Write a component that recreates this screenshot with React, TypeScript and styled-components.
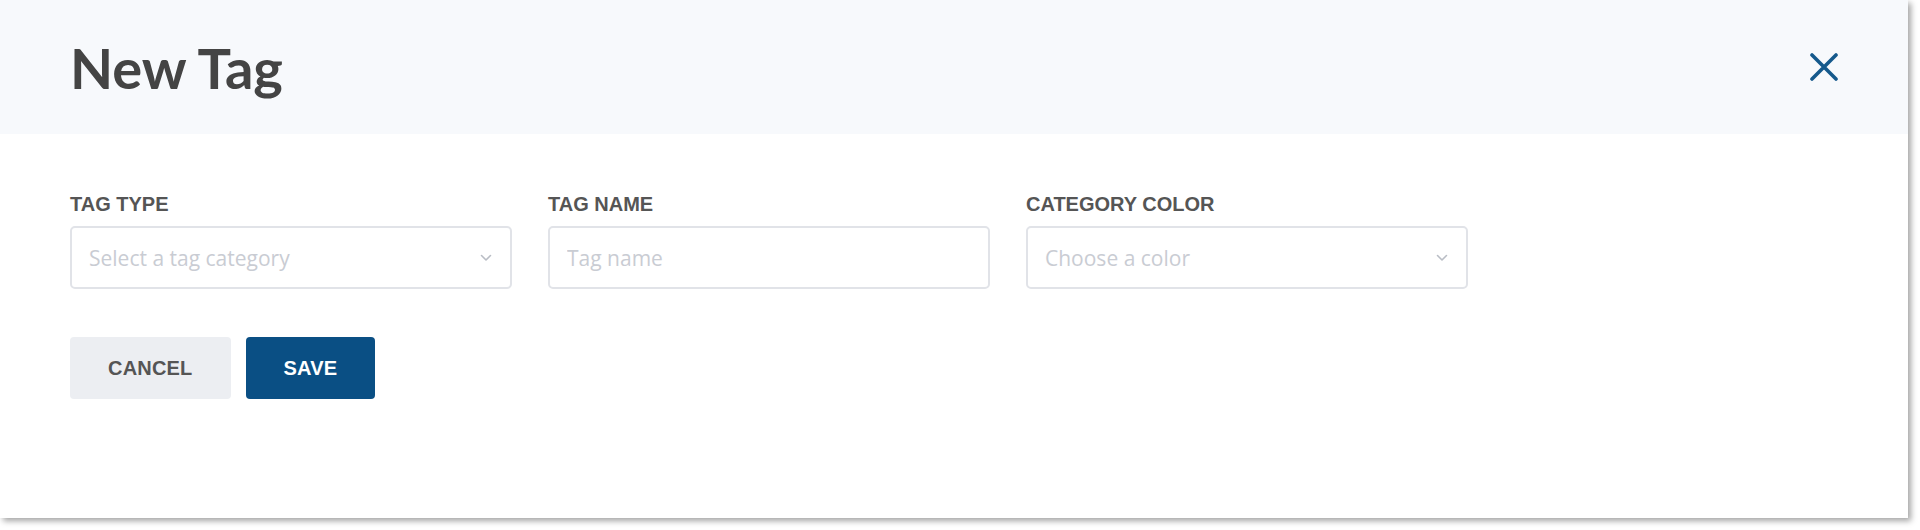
import React from 'react';
import styled, { createGlobalStyle } from 'styled-components';

const GlobalStyle = createGlobalStyle`
  html, body {
    margin: 0;
    padding: 0;
    background: #ffffff;
  }
  * {
    box-sizing: border-box;
  }
`;

const Page = styled.div`
  width: 1920px;
  height: 530px;
  padding: 0 12px 12px 0;
`;

const Modal = styled.section`
  width: 100%;
  height: 100%;
  background: #ffffff;
  box-shadow: 3px 3px 6px rgba(0, 0, 0, 0.36);
  display: flex;
  flex-direction: column;
`;

const Header = styled.header`
  height: 134px;
  background: #f7f9fc;
  display: flex;
  align-items: center;
  justify-content: space-between;
  padding: 0 70px;
`;

const Title = styled.h1`
  margin: 0;
  font-family: Lato, 'Noto Sans', sans-serif;
  font-weight: 700;
  font-size: 56px;
  color: #444444;
`;

const CloseButton = styled.button`
  border: 0;
  background: none;
  padding: 0;
  width: 30px;
  height: 30px;
  display: flex;
  align-items: center;
  justify-content: center;
  margin-right: -1px;
  cursor: pointer;
`;

const Body = styled.div`
  padding: 58px 70px 0;
  display: flex;
  flex-direction: column;
  gap: 48px;
`;

const FieldRow = styled.div`
  display: grid;
  grid-template-columns: repeat(3, 442px);
  column-gap: 36px;
`;

const Field = styled.label`
  display: flex;
  flex-direction: column;
  gap: 10px;
`;

const Label = styled.span`
  font-family: 'Liberation Sans', Arial, sans-serif;
  font-weight: 700;
  font-size: 20px;
  line-height: 24px;
  color: #555555;
`;

const Box = styled.div`
  height: 63px;
  border: 2px solid #e1e3e8;
  border-radius: 5px;
  background: #ffffff;
  display: flex;
  align-items: center;
  justify-content: space-between;
  padding: 0 18px 0 17px;
`;

const Placeholder = styled.span`
  font-family: 'Open Sans', sans-serif;
  font-size: 21px;
  color: #c9ccd3;
`;

const TextInput = styled.input`
  height: 63px;
  border: 2px solid #e1e3e8;
  border-radius: 5px;
  padding: 0 17px;
  font-family: 'Open Sans', sans-serif;
  font-size: 21px;
  color: #444444;
  outline: none;

  &::placeholder {
    color: #c9ccd3;
  }
`;

const Actions = styled.div`
  display: flex;
  gap: 15px;
`;

const Button = styled.button<{ $primary?: boolean }>`
  height: 62px;
  padding: 0 38px;
  border: 0;
  border-radius: 4px;
  font-family: 'Liberation Sans', Arial, sans-serif;
  font-weight: 700;
  font-size: 20px;
  letter-spacing: 0.2px;
  cursor: pointer;
  background: ${(p) => (p.$primary ? '#0a4f84' : '#eceef2')};
  color: ${(p) => (p.$primary ? '#ffffff' : '#555555')};
`;

const Chevron = () => (
  <svg width="12" height="8" viewBox="0 0 12 8" fill="none">
    <path d="M1.5 1.5 L6 6 L10.5 1.5" stroke="#b9bdc5" strokeWidth="1.6" strokeLinecap="round" strokeLinejoin="round" />
  </svg>
);

const CloseIcon = () => (
  <svg width="28" height="28" viewBox="0 0 28 28" fill="none">
    <path d="M2 2 L26 26 M26 2 L2 26" stroke="#15598c" strokeWidth="3.6" strokeLinecap="round" />
  </svg>
);

const SelectBox = ({ placeholder }: { placeholder: string }) => (
  <Box>
    <Placeholder>{placeholder}</Placeholder>
    <Chevron />
  </Box>
);

export default function App() {
  return (
    <>
      <GlobalStyle />
      <Page>
        <Modal>
          <Header>
            <Title>New Tag</Title>
            <CloseButton aria-label="Close">
              <CloseIcon />
            </CloseButton>
          </Header>
          <Body>
            <FieldRow>
              <Field>
                <Label>TAG TYPE</Label>
                <SelectBox placeholder="Select a tag category" />
              </Field>
              <Field>
                <Label>TAG NAME</Label>
                <TextInput placeholder="Tag name" />
              </Field>
              <Field>
                <Label>CATEGORY COLOR</Label>
                <SelectBox placeholder="Choose a color" />
              </Field>
            </FieldRow>
            <Actions>
              <Button>CANCEL</Button>
              <Button $primary>SAVE</Button>
            </Actions>
          </Body>
        </Modal>
      </Page>
    </>
  );
}
